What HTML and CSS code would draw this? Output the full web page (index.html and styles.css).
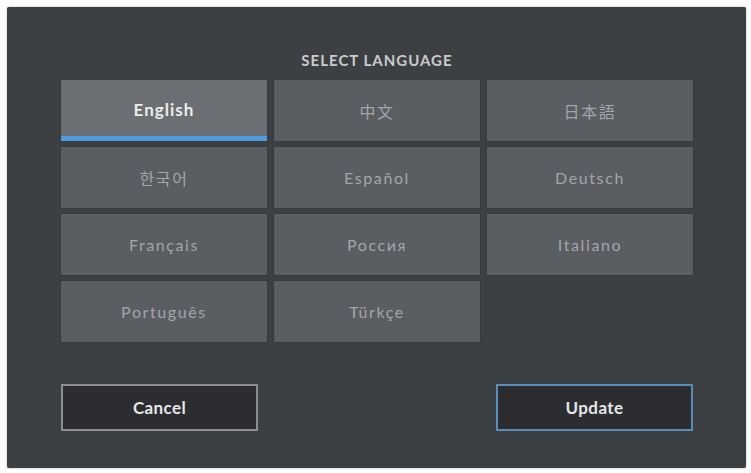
FILE: index.html
```html
<!DOCTYPE html>
<html lang="en">
<head>
    <meta charset="UTF-8">
    <title>Select Language</title>
    <link rel="stylesheet" href="styles.css">
</head>
<body>
<div class="panel">
    <div class="title">SELECT LANGUAGE</div>

    <!-- Language grid -->
    <div class="lang-grid">
        <div class="lang selected">English</div>
        <div class="lang">中文</div>
        <div class="lang">日本語</div>
        <div class="lang">한국어</div>
        <div class="lang">Español</div>
        <div class="lang">Deutsch</div>
        <div class="lang">Français</div>
        <div class="lang">Россия</div>
        <div class="lang">Italiano</div>
        <div class="lang">Português</div>
        <div class="lang">Türkçe</div>
    </div>

    <!-- Actions -->
    <div class="actions">
        <div class="btn cancel">Cancel</div>
        <div class="btn update">Update</div>
    </div>
</div>
</body>
</html>
```

FILE: styles.css
```css
body {
    margin: 0;
    background: #fff;
    font-family: Lato, "Noto Sans CJK SC", sans-serif;
}
.panel {
    margin: 7px;
    width: 739px;
    height: 461px;
    box-sizing: border-box;
    background: #3d4043;
    border-radius: 2px;
    box-shadow: 0 0 2px rgba(0, 0, 0, 0.4);
    padding: 44px 0 0 54px;
}
.title {
    width: 632px;
    text-align: center;
    color: #c9cbcd;
    font-size: 15px;
    font-weight: bold;
    letter-spacing: 1px;
    line-height: 18px;
    margin-bottom: 11px;
}
.lang-grid {
    display: grid;
    grid-template-columns: repeat(3, 206px);
    grid-auto-rows: 61px;
    gap: 6px 7px;
}
.lang {
    background: #5a5d61;
    box-shadow: 0 0 0 1px rgba(0, 0, 0, 0.08);
    color: #a3a6a9;
    font-size: 16px;
    letter-spacing: 1.6px;
    display: flex;
    align-items: center;
    justify-content: center;
}
.lang.selected {
    background: #6b6e73;
    color: #eceded;
    font-size: 17px;
    font-weight: bold;
    letter-spacing: 1px;
    border-bottom: 5px solid #4c9de0;
    padding-top: 2px;
}
.actions {
    display: flex;
    justify-content: space-between;
    width: 632px;
    margin-top: 42px;
}
.btn {
    width: 197px;
    height: 47px;
    box-sizing: border-box;
    background: #2b2d30;
    color: #e6e7e8;
    font-size: 17px;
    font-weight: bold;
    letter-spacing: 0.4px;
    display: flex;
    align-items: center;
    justify-content: center;
}
.cancel {
    border: 2px solid #8b8d90;
}
.update {
    border: 2px solid #5b8bb8;
}
```
